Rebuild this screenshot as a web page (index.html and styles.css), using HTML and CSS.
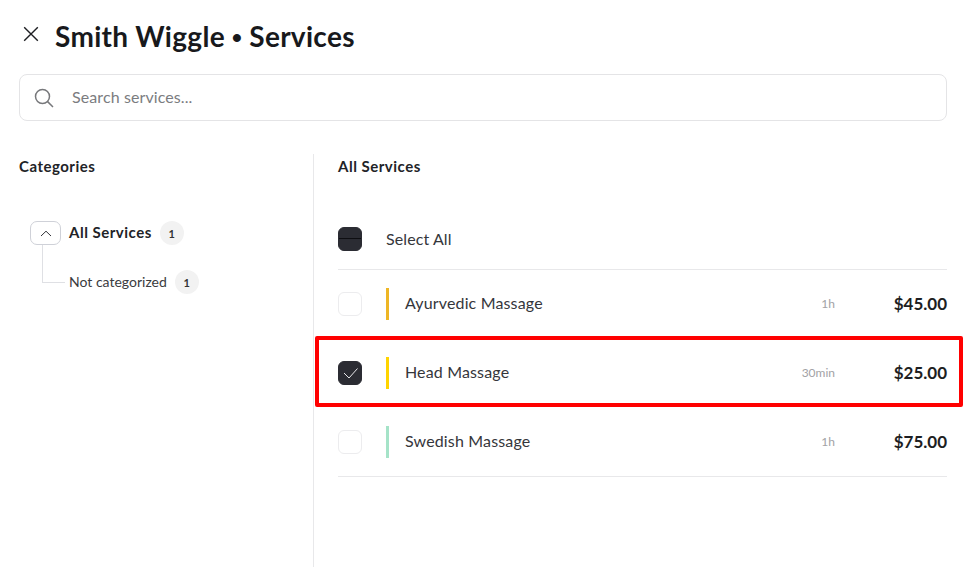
FILE: index.html
```html
<!DOCTYPE html>
<html lang="en">
<head>
    <meta charset="UTF-8">
    <title>Smith Wiggle - Services</title>
    <link rel="stylesheet" href="styles.css">
</head>
<body>
    <div class="header">
        <svg class="close-icon" width="16" height="16" viewBox="0 0 16 16"><path d="M1.2 1.2L14.8 14.8M14.8 1.2L1.2 14.8" stroke="#1d1e22" stroke-width="1.4" fill="none"/></svg>
        <h1 class="title">Smith Wiggle <span class="dot">•</span> Services</h1>
    </div>

    <div class="search">
        <svg class="search-icon" width="20" height="20" viewBox="0 0 20 20"><circle cx="8.5" cy="8.5" r="7" stroke="#77787b" stroke-width="1.5" fill="none"/><path d="M13.6 13.6L19 19" stroke="#77787b" stroke-width="1.5" fill="none"/></svg>
        <span class="search-text">Search services...</span>
    </div>

    <div class="content">
        <div class="sidebar">
            <div class="section-title">Categories</div>
            <div class="tree">
                <div class="tree-root">
                    <div class="toggle">
                        <svg width="12" height="7" viewBox="0 0 12 7"><path d="M1 6L6 1.2L11 6" stroke="#33343a" stroke-width="1" fill="none"/></svg>
                    </div>
                    <span class="tree-name">All Services</span>
                    <span class="badge">1</span>
                </div>
                <div class="tree-child">
                    <span class="connector"></span>
                    <span class="child-name">Not categorized</span>
                    <span class="badge">1</span>
                </div>
            </div>
        </div>

        <div class="main">
            <div class="section-title">All Services</div>
            <div class="list">
                <div class="select-all">
                    <span class="check filled"><span class="dash"></span></span>
                    <span class="select-label">Select All</span>
                </div>
                <div class="row">
                    <span class="check"></span>
                    <span class="stripe orange"></span>
                    <span class="name">Ayurvedic Massage</span>
                    <span class="time">1h</span>
                    <span class="price">$45.00</span>
                </div>
                <div class="row">
                    <span class="check filled">
                        <svg width="16" height="12" viewBox="0 0 16 12"><path d="M2 6L7 11L15.5 1.5" stroke="#e8e8ea" stroke-width="1" fill="none"/></svg>
                    </span>
                    <span class="stripe yellow"></span>
                    <span class="name">Head Massage</span>
                    <span class="time">30min</span>
                    <span class="price">$25.00</span>
                </div>
                <div class="row">
                    <span class="check"></span>
                    <span class="stripe green"></span>
                    <span class="name">Swedish Massage</span>
                    <span class="time">1h</span>
                    <span class="price">$75.00</span>
                </div>
            </div>
        </div>
    </div>

    <!-- annotation over the selected row -->
    <div class="highlight"></div>
</body>
</html>
```

FILE: styles.css
```css
html, body {
    height: 100%;
}

body {
    margin: 0;
    padding: 0 20px 0 19px;
    height: 567px;
    box-sizing: border-box;
    overflow: hidden;
    position: relative;
    background-color: #ffffff;
    font-family: Lato, "Liberation Sans", sans-serif;
    color: #1d1e22;
}

.header {
    display: flex;
    align-items: center;
    height: 74px;
    box-sizing: border-box;
    padding: 0 0 2px 4px;
}

.close-icon {
    margin-right: 16px;
    margin-top: -4px;
}

.title {
    margin: 0;
    font-size: 28px;
    font-weight: 700;
    letter-spacing: 0.3px;
    color: #18191c;
}

.dot {
    font-family: "Liberation Sans", sans-serif;
}

.search {
    display: flex;
    align-items: center;
    height: 47px;
    box-sizing: border-box;
    border: 1px solid #e4e4e6;
    border-radius: 8px;
    padding-left: 14px;
}

.search-icon {
    margin-right: 18px;
}

.search-text {
    margin-top: -2px;
    font-size: 16px;
    letter-spacing: 0.1px;
    color: #7b7c80;
}

.content {
    display: flex;
    margin-top: 33px;
    height: 413px;
}

.sidebar {
    width: 294px;
    border-right: 1px solid #e8e8ea;
}

.section-title {
    font-size: 15px;
    font-weight: 700;
    letter-spacing: 0.5px;
    line-height: 20px;
    padding-top: 2px;
    color: #222327;
}

.tree {
    padding: 45px 0 0 11px;
}

.tree-root {
    display: flex;
    align-items: center;
    height: 24px;
}

.toggle {
    display: flex;
    align-items: center;
    justify-content: center;
    width: 31px;
    height: 24px;
    box-sizing: border-box;
    border: 1px solid #cfd1d8;
    border-radius: 7px;
    margin-right: 8px;
}

.tree-name {
    margin-top: -2px;
    font-size: 15px;
    font-weight: 700;
    letter-spacing: 0.5px;
    color: #222327;
}

.badge {
    display: flex;
    align-items: center;
    justify-content: center;
    width: 24px;
    height: 24px;
    margin-left: 8px;
    border-radius: 50%;
    background-color: #f2f2f2;
    font-size: 11px;
    font-weight: 700;
    color: #333333;
}

.tree-child {
    display: flex;
    align-items: center;
    height: 24px;
    margin-top: 25px;
    position: relative;
}

.connector {
    position: absolute;
    left: 12px;
    top: -25px;
    width: 22px;
    height: 37px;
    border-left: 1px solid #dfe0e4;
    border-bottom: 1px solid #dfe0e4;
}

.child-name {
    margin: -2px 0 0 39px;
    font-size: 14px;
    color: #3a3b40;
}

.main {
    flex: 1;
    padding-left: 24px;
}

.list {
    margin-top: 28px;
    border-bottom: 1px solid #e8e8ea;
}

.select-all {
    display: flex;
    align-items: center;
    height: 66px;
    box-sizing: border-box;
    padding-top: 5px;
    margin-bottom: -1px;
    border-bottom: 1px solid #e8e8ea;
}

.row {
    display: flex;
    align-items: center;
    height: 69px;
}

.check {
    display: flex;
    align-items: center;
    justify-content: center;
    width: 24px;
    height: 24px;
    box-sizing: border-box;
    border: 1px solid #ececee;
    border-radius: 6px;
    margin-right: 24px;
    flex-shrink: 0;
}

.filled {
    background-color: #2b2c33;
    border-color: #2b2c33;
}

.dash {
    width: 22px;
    height: 1px;
    margin-top: -2px;
    background-color: #0e0e12;
}

.select-label {
    margin-top: -2px;
    font-size: 16px;
    letter-spacing: 0.1px;
    color: #35363b;
}

.stripe {
    width: 3px;
    height: 32px;
    margin-right: 16px;
}

.orange { background-color: #eeb625; }
.yellow { background-color: #ffd400; }
.green { background-color: #a5e3c8; }

.name {
    flex: 1;
    margin-top: -2px;
    font-size: 16px;
    letter-spacing: 0.15px;
    color: #35363b;
}

.time {
    font-size: 12px;
    color: #a2a2a5;
}

.price {
    width: 112px;
    text-align: right;
    font-size: 17px;
    font-weight: 700;
    color: #1d1e22;
}

.highlight {
    position: absolute;
    left: 315px;
    top: 336px;
    width: 648px;
    height: 71px;
    box-sizing: border-box;
    border: 4px solid #ff0000;
    border-radius: 2px;
}
```
